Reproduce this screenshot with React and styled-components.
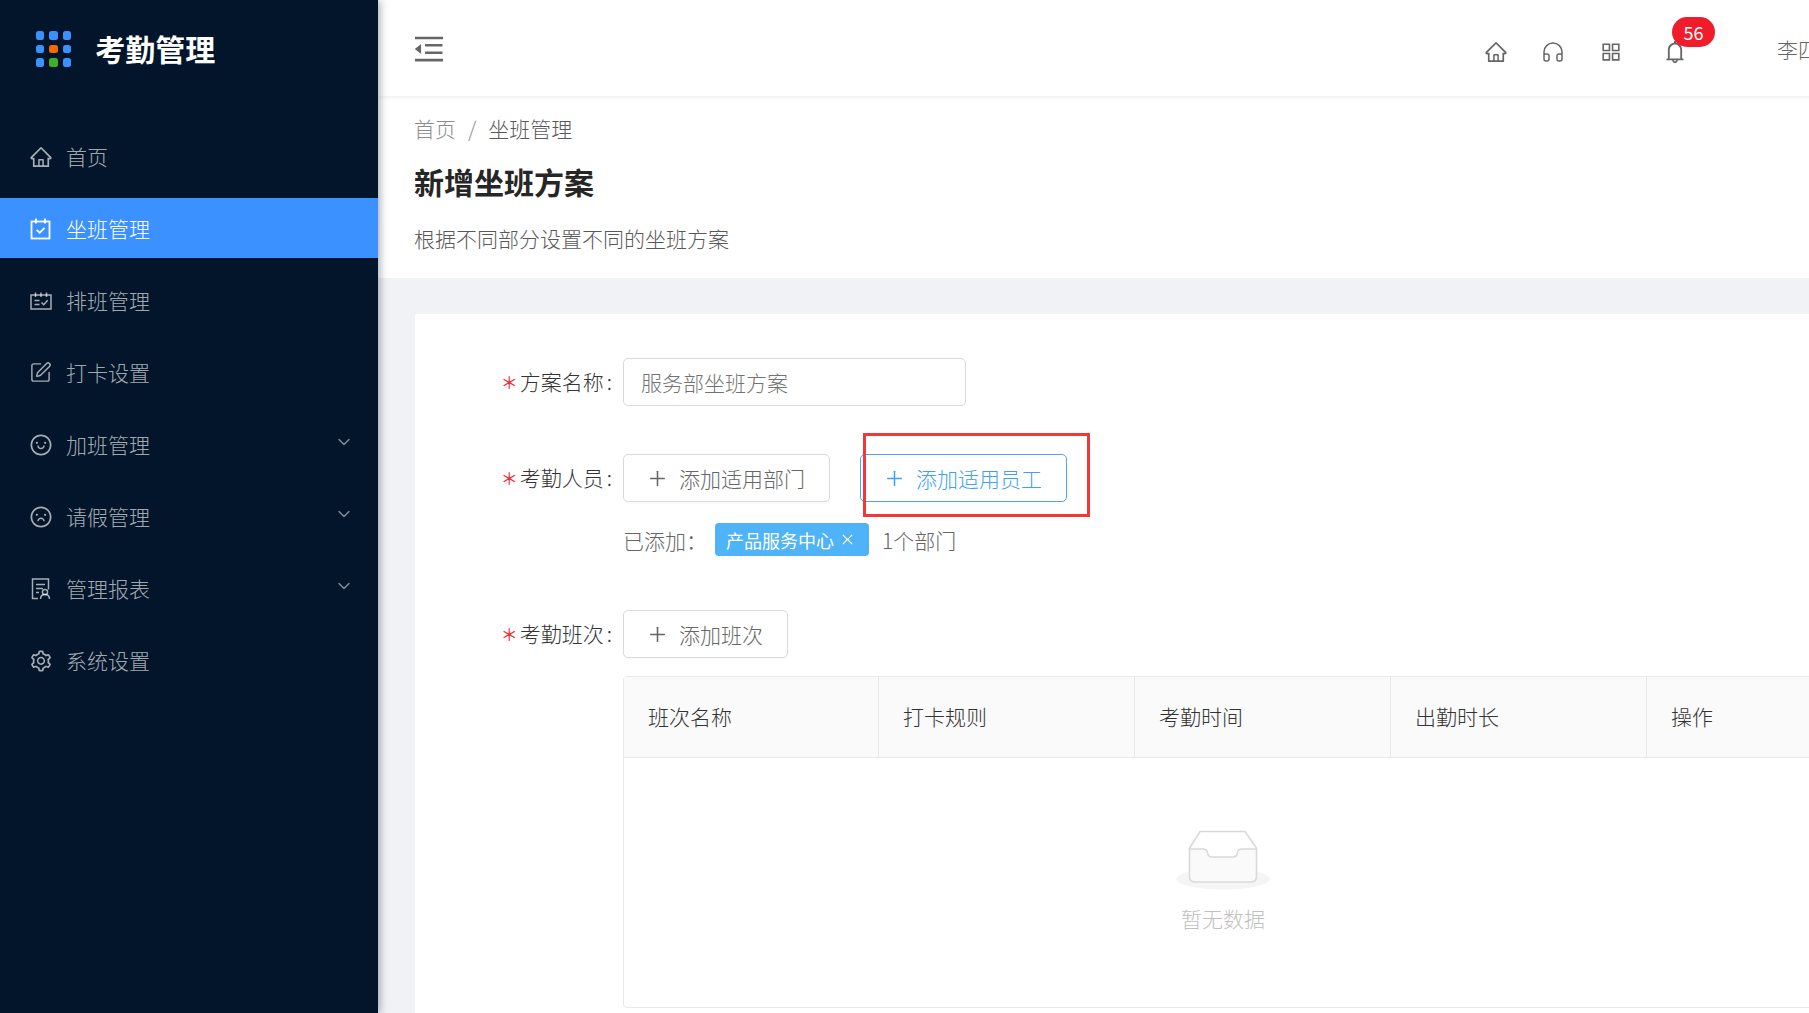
import React from 'react';
import styled, { createGlobalStyle } from 'styled-components';
import {
  AiOutlineHome, AiOutlineSmile, AiOutlineFrown, AiOutlineSetting, AiOutlineBell,
  AiOutlineAppstore, AiOutlineMenuFold, AiOutlinePlus, AiOutlineClose,
} from 'react-icons/ai';
import { SquarePen, Headphones, ChevronDown } from 'lucide-react';

const Global = createGlobalStyle`
  html, body { margin: 0; padding: 0; height: 100%; overflow: hidden; background: #f0f2f5; }
  #root { height: 100%; }
  * { box-sizing: border-box; }
  body { font-family: "Noto Sans CJK SC", "Open Sans", sans-serif; font-size: 21px; font-weight: 300; }
`;

const Shell = styled.div`
  display: flex;
  width: 100vw;
  height: 100vh;
  overflow: hidden;
`;

const Sidebar = styled.aside`
  flex: none;
  width: 378px;
  height: 100%;
  background: #02152b;
  box-shadow: 2px 0 8px rgba(0, 21, 41, 0.35);
  position: relative;
  z-index: 3;
`;

const Brand = styled.div`
  display: flex;
  align-items: center;
  gap: 24px;
  height: 98px;
  padding-left: 36px;
  margin-bottom: 28px;
`;

const DotGrid = styled.div`
  display: grid;
  grid-template-columns: repeat(3, 8.4px);
  grid-auto-rows: 8.4px;
  gap: 5px;
`;

const Dot = styled.span`
  border-radius: 2.5px;
  background: ${p => p.$color || '#3a91ff'};
`;

const BrandName = styled.div`
  color: #fff;
  font-size: 30px;
  font-weight: 700;
  line-height: 40px;
  margin-bottom: 2px;
`;

const Nav = styled.nav`
  display: flex;
  flex-direction: column;
  gap: 12px;
`;

const NavItem = styled.div`
  display: flex;
  align-items: center;
  gap: 15px;
  height: 60px;
  padding: 0 24px 0 30px;
  font-size: 21px;
  color: ${p => (p.$active ? '#fff' : 'rgba(255,255,255,0.65)')};
  background: ${p => (p.$active ? '#3a91ff' : 'transparent')};
`;

const NavIcon = styled.span`
  flex: none;
  width: 21px;
  height: 24px;
  margin-top: 1px;
  display: flex;
  align-items: center;
  justify-content: center;
  svg { flex: none; }
`;

const NavLabel = styled.span`
  flex: 1;
`;

const Caret = styled(ChevronDown)`
  flex: none;
  margin: 0 0 4px 0;
  color: rgba(255, 255, 255, 0.5);
`;

const Main = styled.div`
  flex: none;
  width: 1480px;
  height: 100%;
  display: flex;
  flex-direction: column;
`;

const TopBar = styled.header`
  flex: none;
  height: 96px;
  padding: 2px 39px 0 37px;
  display: flex;
  align-items: center;
  justify-content: space-between;
  background: #fff;
  box-shadow: 0 1px 4px rgba(0, 21, 41, 0.08);
  color: #666;
  position: relative;
  z-index: 2;
`;

const Fold = styled.span`
  display: flex;
  width: 28px;
  height: 28px;
  align-items: center;
  justify-content: center;
  color: #666;
  svg { flex: none; }
`;

const Actions = styled.div`
  display: flex;
  align-items: center;
  margin-top: 6px;
`;

const ActionIcon = styled.span`
  width: 22px;
  height: 24px;
  margin-left: ${p => p.$gap || 0}px;
  display: flex;
  align-items: center;
  justify-content: center;
  position: relative;
  color: #666;
  svg { flex: none; }
`;

const Badge = styled.span`
  position: absolute;
  left: 8px;
  top: -23px;
  width: 43px;
  height: 30px;
  border-radius: 15px;
  background: #f01c2c;
  color: #fff;
  font-size: 18px;
  font-weight: 400;
  line-height: 30px;
  text-align: center;
`;

const UserName = styled.span`
  margin-left: 91px;
  font-size: 21px;
  color: #666;
  white-space: nowrap;
  margin-bottom: 6px;
`;

const PageHead = styled.section`
  flex: none;
  height: 182px;
  padding: 16px 36px 0;
  background: #fff;
`;

const Crumbs = styled.div`
  display: flex;
  gap: 12px;
  font-size: 21px;
  line-height: 32px;
`;

const Crumb = styled.span`
  color: ${p => (p.$current ? '#595959' : '#8c8c8c')};
`;

const PageTitle = styled.h1`
  margin: 16px 0 0;
  font-size: 30px;
  line-height: 42px;
  font-weight: 700;
  color: #262626;
`;

const PageDesc = styled.p`
  margin: 20px 0 0;
  font-size: 21px;
  line-height: 32px;
  color: #595959;
`;

const Content = styled.main`
  flex: 1;
  padding: 36px 37px 0 37px;
  background: #f0f2f5;
`;

const Card = styled.div`
  background: #fff;
  border-radius: 2px;
  padding: 44px 0 40px;
  min-height: 760px;
`;

const FormRow = styled.div`
  display: grid;
  grid-template-columns: 197px 1fr;
  column-gap: 11px;
  align-items: center;
  margin-top: ${p => p.$top || 0}px;
`;

const Label = styled.label`
  display: flex;
  align-items: center;
  justify-content: flex-end;
  padding-bottom: 2px;
  font-size: 21px;
  color: #333;
  white-space: nowrap;
`;

const Star = styled.span`
  color: #f5222d;
  font-size: 17px;
  font-weight: 400;
  margin: 0 2px 0 0;
`;

const Colon = styled.span`
  margin-left: 3px;
`;

const TextInput = styled.input`
  display: block;
  width: 343px;
  height: 48px;
  padding: 0 17px;
  border: 1px solid #d9d9d9;
  border-radius: 5px;
  background: #fff;
  outline: none;
  color: #737373;
  font: inherit;
  font-size: 21px;
`;

const Controls = styled.div`
  display: flex;
  align-items: center;
  gap: 30px;
`;

const Button = styled.button`
  display: inline-flex;
  align-items: center;
  gap: 13px;
  height: 48px;
  padding: 0 24px;
  border: 1px solid ${p => (p.$primary ? '#4ea3f5' : '#d9d9d9')};
  border-radius: 5px;
  background: #fff;
  color: ${p => (p.$primary ? '#40a0f8' : '#666')};
  font: inherit;
  font-size: 21px;
  box-shadow: 0 2px 0 rgba(0, 0, 0, 0.015);
  svg { flex: none; margin: 0 -1.5px; }
`;

const Annotated = styled.span`
  position: relative;
  display: inline-flex;
`;

const RedBox = styled.span`
  position: absolute;
  left: 3px;
  top: -21px;
  width: 227px;
  height: 84px;
  border: 3px solid #f33636;
  pointer-events: none;
`;

const AddedList = styled.div`
  display: flex;
  align-items: center;
  color: #666;
  font-size: 21px;
`;

const Tag = styled.span`
  display: inline-flex;
  align-items: center;
  gap: 6px;
  height: 33px;
  margin: 0 13px 0 8px;
  padding: 0 14px 0 11px;
  border-radius: 4px;
  background: #4fb3f8;
  color: #fff;
  font-size: 18px;
  font-weight: 400;
`;

const TableWrap = styled.div`
  width: 1280px;
  height: 332px;
  margin: 18px 0 0 208px;
  border: 1px solid #e8e8e8;
  border-radius: 4px;
  display: flex;
  flex-direction: column;
`;

const TableHead = styled.div`
  flex: none;
  display: grid;
  grid-template-columns: 255px repeat(4, 256px);
  height: 81px;
  background: #fafafa;
  border-bottom: 1px solid #e8e8e8;
`;

const HeadCell = styled.div`
  display: flex;
  align-items: center;
  padding: 0 0 2px 24px;
  font-size: 21px;
  color: #333;
  border-right: 1px solid #e8e8e8;
`;

const EmptyBody = styled.div`
  flex: 1;
  display: flex;
  justify-content: flex-start;
  padding: 72px 0 0 552px;
`;

const Empty = styled.div`
  display: flex;
  flex-direction: column;
  align-items: center;
  width: 94px;
`;

const EmptyText = styled.div`
  margin-top: 12px;
  color: #bfbfbf;
  font-size: 21px;
  line-height: 32px;
  white-space: nowrap;
`;

const CalendarCheck = () => (
  <svg width="21" height="22" viewBox="0 0 21 22" fill="none" stroke="#fff" strokeWidth="1.8">
    <rect x="1.5" y="3.5" width="18" height="17" />
    <path d="M6 0.5V5.5M15 0.5V5.5" />
    <path d="M6.7 11.8l3 3 4.8-5" />
  </svg>
);

const ScheduleIcon = () => (
  <svg width="22" height="18" viewBox="0 0 22 18" fill="none" stroke="currentColor" strokeWidth="1.5">
    <rect x="1" y="3" width="20" height="14" />
    <path d="M5.5 0.5V5M11 0.5V5M16.5 0.5V5" />
    <path d="M4.5 8.5H9.5M4.5 12.5H9.5" />
    <path d="M11.5 10.5l2.2 2.2 4-4.5" />
  </svg>
);

const ReportIcon = () => (
  <svg width="20" height="22" viewBox="0 0 20 22" fill="none" stroke="currentColor" strokeWidth="1.5">
    <path d="M7 20.5H1.5V1H17.5V11.5" />
    <path d="M5 6.5H14M5 10.5H12M5 14.5H8" />
    <circle cx="14" cy="14" r="2.6" />
    <path d="M9.5 21c0-3.2 1.8-4.6 4.5-4.6s4.5 1.4 4.5 4.6" />
  </svg>
);

const EmptyIcon = () => (
  <svg width="94" height="60" viewBox="0 0 94 60" fill="none">
    <ellipse cx="47" cy="49" rx="47" ry="10.5" fill="#f5f5f5" />
    <path d="M13 19L24 1.5H69L81 19" stroke="#d9d9d9" strokeWidth="1.6" fill="#fff" />
    <path
      d="M13.5 19H27q4 0 4.5 3.5.5 4.5 4.5 4.5h21q4 0 4.5-4.5.5-3.5 4.5-3.5h14.5v27q0 6-5 6H18.500q-5 0-5-6z"
      stroke="#d9d9d9"
      strokeWidth="1.6"
      fill="#fafafa"
    />
  </svg>
);

const logoDots = [null, null, null, null, '#f56a00', null, null, '#3fae29', null];

const menu = [
  { label: '首页', icon: <AiOutlineHome size={24} /> },
  { label: '坐班管理', icon: <CalendarCheck />, active: true },
  { label: '排班管理', icon: <ScheduleIcon /> },
  { label: '打卡设置', icon: <SquarePen size={23} strokeWidth={1.5} /> },
  { label: '加班管理', icon: <AiOutlineSmile size={24} />, caret: true },
  { label: '请假管理', icon: <AiOutlineFrown size={24} />, caret: true },
  { label: '管理报表', icon: <ReportIcon />, caret: true },
  { label: '系统设置', icon: <AiOutlineSetting size={24} /> },
];

const columns = ['班次名称', '打卡规则', '考勤时间', '出勤时长', '操作'];

const RequiredLabel = ({ children }) => (
  <Label>
    <Star>＊</Star>
    {children}
    <Colon>:</Colon>
  </Label>
);

export default function App() {
  return (
    <Shell>
      <Global />
      <Sidebar>
        <Brand>
          <DotGrid>
            {logoDots.map((c, i) => <Dot key={i} $color={c} />)}
          </DotGrid>
          <BrandName>考勤管理</BrandName>
        </Brand>
        <Nav>
          {menu.map(m => (
            <NavItem key={m.label} $active={m.active}>
              <NavIcon>{m.icon}</NavIcon>
              <NavLabel>{m.label}</NavLabel>
              {m.caret && <Caret size={20} strokeWidth={1.8} />}
            </NavItem>
          ))}
        </Nav>
      </Sidebar>
      <Main>
        <TopBar>
          <Fold><AiOutlineMenuFold size={36} /></Fold>
          <Actions>
            <ActionIcon><AiOutlineHome size={24} /></ActionIcon>
            <ActionIcon $gap={35}><Headphones size={24} strokeWidth={1.5} /></ActionIcon>
            <ActionIcon $gap={36}><AiOutlineAppstore size={24} /></ActionIcon>
            <ActionIcon $gap={42}>
              <AiOutlineBell size={26} />
              <Badge>56</Badge>
            </ActionIcon>
            <UserName>李四</UserName>
          </Actions>
        </TopBar>
        <PageHead>
          <Crumbs>
            <Crumb>首页</Crumb>
            <Crumb>/</Crumb>
            <Crumb $current>坐班管理</Crumb>
          </Crumbs>
          <PageTitle>新增坐班方案</PageTitle>
          <PageDesc>根据不同部分设置不同的坐班方案</PageDesc>
        </PageHead>
        <Content>
          <Card>
            <FormRow>
              <RequiredLabel>方案名称</RequiredLabel>
              <TextInput readOnly value="服务部坐班方案" />
            </FormRow>
            <FormRow $top={48}>
              <RequiredLabel>考勤人员</RequiredLabel>
              <Controls>
                <Button><AiOutlinePlus size={21} />添加适用部门</Button>
                <Annotated>
                  <Button $primary><AiOutlinePlus size={21} />添加适用员工</Button>
                  <RedBox />
                </Annotated>
              </Controls>
            </FormRow>
            <FormRow $top={21}>
              <span />
              <AddedList>
                已添加：
                <Tag>产品服务中心<AiOutlineClose size={15} /></Tag>
                1个部门
              </AddedList>
            </FormRow>
            <FormRow $top={54}>
              <RequiredLabel>考勤班次</RequiredLabel>
              <Controls>
                <Button><AiOutlinePlus size={21} />添加班次</Button>
              </Controls>
            </FormRow>
            <TableWrap>
              <TableHead>
                {columns.map(c => <HeadCell key={c}>{c}</HeadCell>)}
              </TableHead>
              <EmptyBody>
                <Empty>
                  <EmptyIcon />
                  <EmptyText>暂无数据</EmptyText>
                </Empty>
              </EmptyBody>
            </TableWrap>
          </Card>
        </Content>
      </Main>
    </Shell>
  );
}
